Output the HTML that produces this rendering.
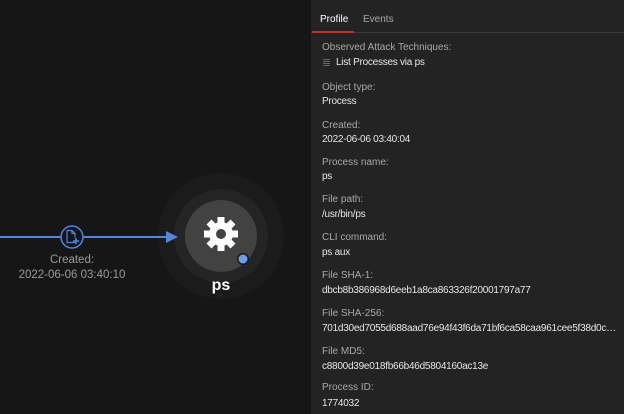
<!DOCTYPE html>
<html><head><style>
body{margin:0;width:624px;height:414px;background:#161616;position:relative;overflow:hidden;font-family:"Liberation Sans",sans-serif}
.p{position:absolute;left:311px;top:0;width:313px;height:414px;background:#232323}
.t{position:absolute;white-space:nowrap;font-size:10px}
.l{color:#a8a8a8}.v{color:#e6e6e6;letter-spacing:-0.25px}
</style></head><body>
<svg width="311" height="414" style="position:absolute;left:0;top:0">
<circle cx="221" cy="236" r="63" fill="#1b1b1b"/>
<circle cx="221" cy="236" r="47" fill="#242424"/>
<circle cx="221" cy="236" r="36" fill="#424242"/>
<line x1="0" y1="237" x2="168" y2="237" stroke="#4f86e0" stroke-width="2"/>
<polygon points="166,231 178,237 166,243" fill="#4f86e0"/>
<circle cx="72" cy="237" r="11" fill="#161616" stroke="#4f86e0" stroke-width="1.5"/>
<path d="M67 230.5h5l3 3v4M72 230.5v3h3M75 242.5h-8v-12" fill="none" stroke="#4f86e0" stroke-width="1.2"/>
<path d="M76 238v6M73 241h6" stroke="#4f86e0" stroke-width="1.6"/>
<g transform="translate(221,234)" fill="#fff">
<circle r="12"/>
<g id="t"><rect x="-3.5" y="-17" width="7" height="7"/></g>
<use href="#t" transform="rotate(45)"/><use href="#t" transform="rotate(90)"/><use href="#t" transform="rotate(135)"/>
<use href="#t" transform="rotate(180)"/><use href="#t" transform="rotate(225)"/><use href="#t" transform="rotate(270)"/><use href="#t" transform="rotate(315)"/>
<circle r="5" fill="#424242"/>
</g>
<circle cx="243" cy="259" r="6" fill="#1a1a1a"/>
<circle cx="243" cy="259" r="4.5" fill="#6a9ff0"/>
<text x="221" y="290" fill="#fff" font-size="16" font-weight="bold" text-anchor="middle" font-family="Liberation Sans">ps</text>
<text x="72" y="263" fill="#9a9a9a" font-size="11.5" text-anchor="middle" font-family="Liberation Sans">Created:</text>
<text x="72" y="278" fill="#9a9a9a" font-size="11.5" text-anchor="middle" font-family="Liberation Sans">2022-06-06 03:40:10</text>
</svg>
<div class="p">
<div style="position:absolute;left:0;top:32px;width:313px;height:1px;background:#3a3a3a"></div>
<div style="position:absolute;left:1px;top:31px;width:42px;height:2px;background:#d0262d"></div>
<div class="t" style="left:9px;top:14px;color:#fff;font-size:10px">Profile</div>
<div class="t" style="left:52px;top:14px;color:#a8a8a8">Events</div>
<div class="t l" style="left:11px;top:42px">Observed Attack Techniques:</div>
<div style="position:absolute;left:12px;top:59px;width:7px;height:7px;background:repeating-linear-gradient(#666 0 1px,transparent 1px 2px)"></div>
<div class="t v" style="left:25px;top:57px">List Processes via ps</div>
<div class="t l" style="left:11px;top:82px">Object type:</div>
<div class="t v" style="left:11px;top:96px">Process</div>
<div class="t l" style="left:11px;top:120px">Created:</div>
<div class="t v" style="left:11px;top:134px">2022-06-06 03:40:04</div>
<div class="t l" style="left:11px;top:157px">Process name:</div>
<div class="t v" style="left:11px;top:171px">ps</div>
<div class="t l" style="left:11px;top:194px">File path:</div>
<div class="t v" style="left:11px;top:209px">/usr/bin/ps</div>
<div class="t l" style="left:11px;top:232px">CLI command:</div>
<div class="t v" style="left:11px;top:247px">ps aux</div>
<div class="t l" style="left:11px;top:270px">File SHA-1:</div>
<div class="t v" style="left:11px;top:285px">dbcb8b386968d6eeb1a8ca863326f20001797a77</div>
<div class="t l" style="left:11px;top:308px">File SHA-256:</div>
<div class="t v" style="left:11px;top:323px;width:299px;overflow:hidden;text-overflow:ellipsis">701d30ed7055d688aad76e94f43f6da71bf6ca58caa961cee5f38d0c45c0a1b2c3d4e5f</div>
<div class="t l" style="left:11px;top:346px">File MD5:</div>
<div class="t v" style="left:11px;top:361px">c8800d39e018fb66b46d5804160ac13e</div>
<div class="t l" style="left:11px;top:382px">Process ID:</div>
<div class="t v" style="left:11px;top:398px">1774032</div>
</div>
</body></html>
